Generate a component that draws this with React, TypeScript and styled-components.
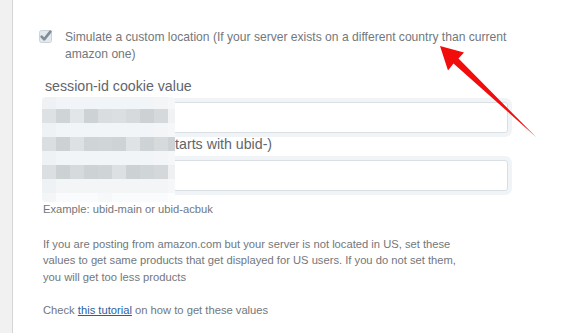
import React from 'react';
import styled, { createGlobalStyle } from 'styled-components';

const GlobalStyle = createGlobalStyle`
	body {
		margin: 0;
		background: #fff;
		font-family: "Liberation Sans", Arial, sans-serif;
	}
`;

const Page = styled.div`
	position: relative;
	display: flex;
	min-height: 333px;
	overflow: hidden;
`;

const Sidebar = styled.div`
	width: 12px;
	flex-shrink: 0;
	background: #f1f1f1;
	border-right: 1px solid #d5d5d5;
`;

const Main = styled.div`
	padding: 29px 0 0 29px;
`;

const Form = styled.div`
	position: relative;
	width: 466px;
`;

const CheckRow = styled.label`
	display: flex;
	align-items: flex-start;
	margin-left: -3px;
	gap: 13px;
	font-size: 12.1px;
	line-height: 16.5px;
	color: #72777c;
`;

const Box = styled.svg`
	flex-shrink: 0;
	margin-top: 1px;
`;

const FieldLabel = styled.div<{ $top: number }>`
	margin: ${p => p.$top}px 0 0 3px;
	font-size: 14.2px;
	line-height: 20px;
	color: #5f666c;
`;

const Input = styled.input`
	display: block;
	box-sizing: border-box;
	width: 462px;
	height: 31px;
	margin: 6px 0 0 4px;
	padding: 0 8px;
	border: 1px solid #d9dfe3;
	border-radius: 3px;
	box-shadow: 0 0 0 4px #f1f4f7;
	background: #fff;
	outline: none;
`;

const Text = styled.p<{ $top: number }>`
	max-width: 425px;
	margin: ${p => p.$top}px 0 0 1px;
	font-size: 11.2px;
	line-height: 16.5px;
	color: #72777c;
`;

const Link = styled.a`
	color: #2a5f9e;
	text-decoration: underline;
`;

const Mosaic = styled.div`
	position: absolute;
	left: 0;
	top: 68px;
	width: 133px;
	height: 105px;
	border-radius: 4px;
	overflow: hidden;
	display: grid;
	grid-template-columns: repeat(9, 14px) 7px;
	grid-template-rows: 12px repeat(6, 14px) 9px;
`;

const Cell = styled.div<{ $c: string }>`
	background: ${p => p.$c};
`;

const Arrow = styled.svg`
	position: absolute;
	left: 0;
	top: 0;
	pointer-events: none;
`;

const light = ['#eef2f5', '#f2f5f7', '#f2f5f7', '#f2f5f7', '#f2f5f7', '#f2f5f7', '#f2f5f7', '#f2f5f7', '#f3f5f7', '#f5f7f9'];

const rows: string[][] = [
	light,
	['#dde1e4', '#cfd4d7', '#e3e6e8', '#cdd2d5', '#d9dde0', '#dbdfe2', '#d6dadd', '#cdd1d4', '#d5d9dc', '#f0f2f4'],
	light,
	['#dadee1', '#ccd1d4', '#dde1e3', '#cfd4d7', '#d0d5d8', '#ced3d6', '#e0e3e5', '#ced3d6', '#d6dadd', '#cdd2d5'],
	light,
	['#dbdfe2', '#ccd1d4', '#d6dadd', '#cdd2d5', '#cfd4d7', '#dde0e3', '#ccd1d4', '#d0d5d8', '#d4d8db', '#eef0f2'],
	['#eff2f5', '#f3f5f7', '#f3f5f7', '#f3f5f7', '#f3f5f7', '#f3f5f7', '#f3f5f7', '#f3f5f7', '#f3f5f7', '#f5f7f9'],
	['#f3f5f7', '#fafbfc', '#fafbfc', '#fafbfc', '#f7f8fa', '#fafbfc', '#fafbfc', '#fafbfc', '#fafbfc', '#fcfdfd'],
];

export default function App() {
	return (
		<>
			<GlobalStyle />
			<Page>
				<Sidebar />
				<Main>
					<Form>
						<CheckRow>
							<Box width="13" height="13" viewBox="0 0 13 13">
								<rect x="0.5" y="0.5" width="12" height="12" rx="2" fill="#e4e9ed" stroke="#cbd3d9" />
								<path d="M2.6 6.6 L5.2 9.4 L11.4 1.6" fill="none" stroke="#7f8e9b" strokeWidth="2.6" strokeLinecap="round" strokeLinejoin="round" />
							</Box>
							<span>Simulate a custom location (If your server exists on a different country than current amazon one)</span>
						</CheckRow>
						<FieldLabel $top={14}>session-id cookie value</FieldLabel>
						<Input />
						<FieldLabel $top={1}>ubid- cookie value (starts with ubid-)</FieldLabel>
						<Input />
						<Text $top={10}>Example: ubid-main or ubid-acbuk</Text>
						<Text $top={18}>
							If you are posting from amazon.com but your server is not located in US, set these values to get same products that get displayed for US users. If you do not set them, you will get too less products
						</Text>
						<Text $top={17}>
							Check <Link href="#">this tutorial</Link> on how to get these values
						</Text>
						<Mosaic>
							{rows.map((r, i) => r.map((c, j) => <Cell key={i + '-' + j} $c={c} />))}
						</Mosaic>
					</Form>
				</Main>
				<Arrow width="565" height="333" viewBox="0 0 565 333">
					<polygon points="440,46 464,52.5 458.5,58.5 536,137 453.5,63.5 448,70.5" fill="#f20d0d" />
				</Arrow>
			</Page>
		</>
	);
}
